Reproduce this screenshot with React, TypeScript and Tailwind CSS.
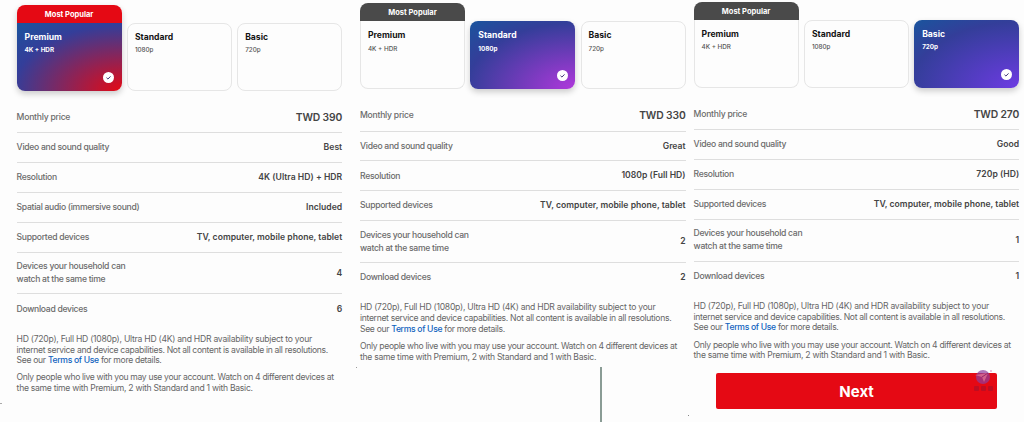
type PlanName = "Premium" | "Standard" | "Basic";

interface Row {
  label: string;
  value: string;
}

interface Panel {
  selected: PlanName;
  price: string;
  offset: string;
  rows: Row[];
}

const PLANS: { name: PlanName; detail: string; gradient: string }[] = [
  {
    name: "Premium",
    detail: "4K + HDR",
    gradient:
      "bg-[radial-gradient(140.76%_131.96%_at_100%_100%,rgb(229,9,20)_0%,rgba(74,42,150,0.5)_73.57%,rgba(74,42,150,0)_100%)]",
  },
  {
    name: "Standard",
    detail: "1080p",
    gradient:
      "bg-[radial-gradient(140.76%_131.96%_at_100%_100%,rgb(176,56,220)_0%,rgba(74,42,150,0.5)_73.57%,rgba(74,42,150,0)_100%)]",
  },
  {
    name: "Basic",
    detail: "720p",
    gradient:
      "bg-[radial-gradient(140.76%_131.96%_at_100%_100%,rgb(109,59,227)_0%,rgba(74,42,150,0.5)_73.57%,rgba(74,42,150,0)_100%)]",
  },
];

const DEVICES = "TV, computer, mobile phone, tablet";
const HOUSEHOLD = "Devices your household can watch at the same time";

const PANELS: Panel[] = [
  {
    selected: "Premium",
    price: "TWD 390",
    offset: "ml-[16.6px] pt-[5px]",
    rows: [
      { label: "Video and sound quality", value: "Best" },
      { label: "Resolution", value: "4K (Ultra HD) + HDR" },
      { label: "Spatial audio (immersive sound)", value: "Included" },
      { label: "Supported devices", value: DEVICES },
      { label: HOUSEHOLD, value: "4" },
      { label: "Download devices", value: "6" },
    ],
  },
  {
    selected: "Standard",
    price: "TWD 330",
    offset: "ml-[17.8px] pt-[3.4px]",
    rows: [
      { label: "Video and sound quality", value: "Great" },
      { label: "Resolution", value: "1080p (Full HD)" },
      { label: "Supported devices", value: DEVICES },
      { label: HOUSEHOLD, value: "2" },
      { label: "Download devices", value: "2" },
    ],
  },
  {
    selected: "Basic",
    price: "TWD 270",
    offset: "ml-[8px] pt-[2px]",
    rows: [
      { label: "Video and sound quality", value: "Good" },
      { label: "Resolution", value: "720p (HD)" },
      { label: "Supported devices", value: DEVICES },
      { label: HOUSEHOLD, value: "1" },
      { label: "Download devices", value: "1" },
    ],
  },
];

function CheckBadge() {
  return (
    <svg className="absolute right-[7.5px] bottom-[8px] size-[11px]" viewBox="0 0 22 22" fill="none">
      <circle cx="11" cy="11" r="11" fill="white" />
      <path d="M7 11.4l2.8 2.7 5.2-5.3" stroke="#3b2f74" strokeWidth="2" />
    </svg>
  );
}

function PlanCards({ selected }: { selected: PlanName }) {
  return (
    <div className="flex items-end gap-[5.3px]">
      {PLANS.map((plan) => {
        const active = plan.name === selected;
        const popular = plan.name === "Premium";
        return (
          <div
            key={plan.name}
            className={`w-[105px] rounded-[8px] ${active ? "shadow-[0_3px_6px_rgba(0,0,0,0.2)]" : ""}`}
          >
            {popular && (
              <div
                className={`h-[17.5px] rounded-t-[8px] text-center text-[7.5px] leading-[19.4px] font-bold text-white ${
                  active ? "bg-[#e50914]" : "bg-[#4a4a4a]"
                }`}
              >
                Most Popular
              </div>
            )}
            <div
              className={`relative h-[68.5px] ${popular ? "rounded-b-[8px]" : "rounded-[8px]"} ${
                active
                  ? `bg-[rgb(29,82,157)] px-[8px] pt-[8.4px] text-white ${plan.gradient}`
                  : popular
                    ? "border border-t-0 border-[#e6e6e6] px-[7px] pt-[8.4px] text-[#141414]"
                    : "border border-[#e6e6e6] px-[7px] pt-[7.4px] text-[#141414]"
              }`}
            >
              <div className="text-[8.6px] leading-[12px] font-bold">{plan.name}</div>
              <div
                className={`mt-[3.4px] text-[6.3px] leading-[8px] ${active ? "font-bold" : "font-medium text-[#555]"}`}
              >
                {plan.detail}
              </div>
              {active && <CheckBadge />}
            </div>
          </div>
        );
      })}
    </div>
  );
}

function FeatureRow({ label, value, last }: Row & { last: boolean }) {
  return (
    <div
      className={`flex items-center justify-between text-[8.6px] font-medium ${last ? "" : "border-b border-[#dedede]"} ${
        label === HOUSEHOLD ? "h-[41.7px]" : "h-[29.9px]"
      }`}
    >
      <span className="w-[130px] leading-[12.8px] tracking-[-0.29px] text-[#6b6b6b]">{label}</span>
      <span className="font-semibold tracking-[0.02px] whitespace-nowrap text-[#444]">{value}</span>
    </div>
  );
}

function FinePrint() {
  return (
    <div className="mt-[9.6px] text-[8.6px] leading-[10.7px] tracking-[-0.32px] whitespace-nowrap text-[#666]">
      <p>
        <span className="tracking-[-0.25px]">
          HD (720p), Full HD (1080p), Ultra HD (4K) and HDR availability subject to your
        </span>
        <br />
        internet service and device capabilities. Not all content is available in all resolutions.
        <br />
        See our <a className="font-medium text-[#0f62bd]">Terms of Use</a> for more details.
      </p>
      <p className="mt-[6.4px]">
        <span className="tracking-[-0.34px]">
          Only people who live with you may use your account. Watch on 4 different devices at
        </span>
        <br />
        <span className="tracking-[-0.28px]">the same time with Premium, 2 with Standard and 1 with Basic.</span>
      </p>
    </div>
  );
}

function Watermark() {
  return (
    <div className="absolute top-[-4px] right-[2px] flex w-[24px] flex-col items-center opacity-70">
      <svg className="h-[16px] w-[18px]" viewBox="0 0 18 16" fill="none">
        <circle cx="9" cy="8" r="7" fill="#8d3f9f" />
        <path d="M1 6L14 4 10 13 8 8z" fill="#c987bd" />
        <path d="M14 4L8 8" stroke="#74328f" />
        <circle cx="17" cy="2" r="0.7" fill="#c0187a" />
      </svg>
      <span className="mt-px flex gap-[2px] opacity-60">
        <i className="size-[5px] rounded-[1px] bg-[#8a1435]" />
        <i className="size-[5px] rounded-[1px] bg-[#8a1435]" />
        <i className="size-[5px] rounded-[1px] bg-[#8a1435]" />
      </span>
    </div>
  );
}

export default function App() {
  return (
    <div className="relative flex h-[422px] w-[1024px] overflow-hidden bg-[#fdfdfd] font-['Inter','Liberation_Sans',sans-serif]">
      {PANELS.map((panel) => (
        <section key={panel.selected} className={`flex h-full w-[325.6px] shrink-0 flex-col ${panel.offset}`}>
          <PlanCards selected={panel.selected} />
          <div className="mt-[11.5px]">
            <div className="flex h-[30.7px] items-center justify-between border-b border-[#dedede] text-[8.6px] font-medium text-[#6b6b6b]">
              <span className="tracking-[-0.24px]">Monthly price</span>
              <span className="text-[10.3px] font-semibold tracking-[-0.12px] text-[#444]">{panel.price}</span>
            </div>
            {panel.rows.map((row, i) => (
              <FeatureRow key={row.label} {...row} last={i === panel.rows.length - 1} />
            ))}
          </div>
          <FinePrint />
          {panel.selected === "Standard" && <div className="mt-[5px] ml-[239.7px] h-[60px] w-[2px] shrink-0 bg-[#8a9c95]" />}
          {panel.selected === "Basic" && (
            <button className="relative mt-[12px] ml-[22.5px] h-[36px] w-[281px] shrink-0 rounded-[2px] bg-[#e50914] pt-[2px] text-[15px] font-bold text-white">
              Next
              <Watermark />
            </button>
          )}
        </section>
      ))}
      {/* stray specks around the panel corners */}
      <i className="absolute top-[403px] left-0 h-px w-[2px] bg-[#aaa]" />
      <i className="absolute top-[367px] left-[356px] size-px bg-[#999]" />
      <i className="absolute top-[415px] left-[688px] size-px bg-[#888]" />
    </div>
  );
}
